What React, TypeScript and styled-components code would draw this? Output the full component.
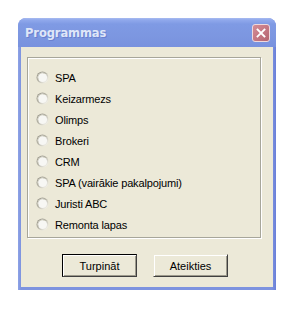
import React from "react";
import styled, { createGlobalStyle } from "styled-components";

const Global = createGlobalStyle`
  html, body { margin: 0; padding: 0; background: #ffffff; }
  body { width: 296px; height: 312px; overflow: hidden; }
`;

const Page = styled.div`
  padding: 18px 0 0 18px;
`;

const Window = styled.div`
  width: 258px;
  height: 272px;
  display: flex;
  flex-direction: column;
  border-radius: 8px 8px 0 0;
  background: linear-gradient(to right, #8ea3e6 0px, #7d93df 3px, #7d93df 254px, #6a7fd8 258px);
  box-sizing: border-box;
  overflow: hidden;
`;

const TitleBar = styled.div`
  height: 29px;
  flex: none;
  display: flex;
  align-items: center;
  padding: 0 6px 0 7px;
  background: linear-gradient(to bottom, #a9bbf0 0px, #90a8ec 2px, #7f9ae4 6px, #7c96e0 20px, #7891de 29px);
  box-sizing: border-box;
`;

const Title = styled.span`
  flex: 1;
  font-family: "DejaVu Sans", "Liberation Sans", sans-serif;
  font-weight: bold;
  font-size: 11.5px;
  letter-spacing: -0.1px;
  color: #dfe6f8;
  text-shadow: 1px 1px 0 #6a80cf;
  padding-top: 1px;
`;

const CloseBtn = styled.div`
  width: 18px;
  height: 18px;
  box-sizing: border-box;
  border: 1px solid #efd8dc;
  border-radius: 3px;
  background: linear-gradient(135deg, #d48d96 0%, #c27480 60%, #b3656f 100%);
  display: flex;
  align-items: center;
  justify-content: center;
`;

const Client = styled.div`
  flex: 1;
  margin: 0 3px 3px 3px;
  background: #ece9d8;
  display: flex;
  flex-direction: column;
  padding: 10px 12px 9px 6px;
  box-sizing: border-box;
`;

const Group = styled.div`
  height: 181px;
  box-sizing: border-box;
  border: 1px solid #a7a69a;
  box-shadow: 1px 1px 0 #ffffff, inset 1px 1px 0 #ffffff;
  padding: 9px 0 0 8px;
  display: flex;
  flex-direction: column;
`;

const Row = styled.label`
  height: 21px;
  display: flex;
  align-items: center;
  gap: 6px;
  font-family: "Liberation Sans", Arial, sans-serif;
  font-size: 11px;
  letter-spacing: -0.15px;
  color: #000;
`;

const Buttons = styled.div`
  margin-top: 16px;
  display: flex;
  gap: 16px;
  padding-left: 35px;
`;

const Button = styled.div<{ $default?: boolean }>`
  width: 75px;
  height: 23px;
  box-sizing: border-box;
  display: flex;
  align-items: center;
  justify-content: center;
  font-family: "Liberation Sans", Arial, sans-serif;
  font-size: 11px;
  color: #000;
  background: #ece9d8;
  border: 1px solid ${(p) => (p.$default ? "#000000" : "#ece9d8")};
  border-right-color: #404040;
  border-bottom-color: #404040;
  box-shadow: inset 1px 1px 0 #ffffff, inset -1px -1px 0 #9d9a8c;
`;

const Radio = () => (
  <svg width="13" height="13" viewBox="0 0 13 13">
    <defs>
      <linearGradient id="rg" x1="0" y1="0" x2="1" y2="1">
        <stop offset="0" stopColor="#8c8a7e" />
        <stop offset="0.45" stopColor="#b5b3a6" />
        <stop offset="0.75" stopColor="#e4e2d8" />
        <stop offset="1" stopColor="#ffffff" />
      </linearGradient>
    </defs>
    <circle cx="6.5" cy="6.5" r="6" fill="url(#rg)" />
    <circle cx="6.5" cy="6.5" r="4.6" fill="#f7f7f4" />
    <path d="M2.6 9 A4.6 4.6 0 0 1 9 2.6" stroke="#d2d0c4" strokeWidth="1" fill="none" />
  </svg>
);

const items = [
  "SPA",
  "Keizarmezs",
  "Olimps",
  "Brokeri",
  "CRM",
  "SPA (vairākie pakalpojumi)",
  "Juristi ABC",
  "Remonta lapas",
];

export default function App() {
  return (
    <>
      <Global />
      <Page>
        <Window>
          <TitleBar>
            <Title>Programmas</Title>
            <CloseBtn>
              <svg width="10" height="10" viewBox="0 0 10 10">
                <path d="M1.5 1.5 L8.5 8.5 M8.5 1.5 L1.5 8.5" stroke="#ffffff" strokeWidth="1.8" strokeLinecap="square" />
              </svg>
            </CloseBtn>
          </TitleBar>
          <Client>
            <Group>
              {items.map((t) => (
                <Row key={t}>
                  <Radio />
                  {t}
                </Row>
              ))}
            </Group>
            <Buttons>
              <Button $default>Turpināt</Button>
              <Button>Ateikties</Button>
            </Buttons>
          </Client>
        </Window>
      </Page>
    </>
  );
}
